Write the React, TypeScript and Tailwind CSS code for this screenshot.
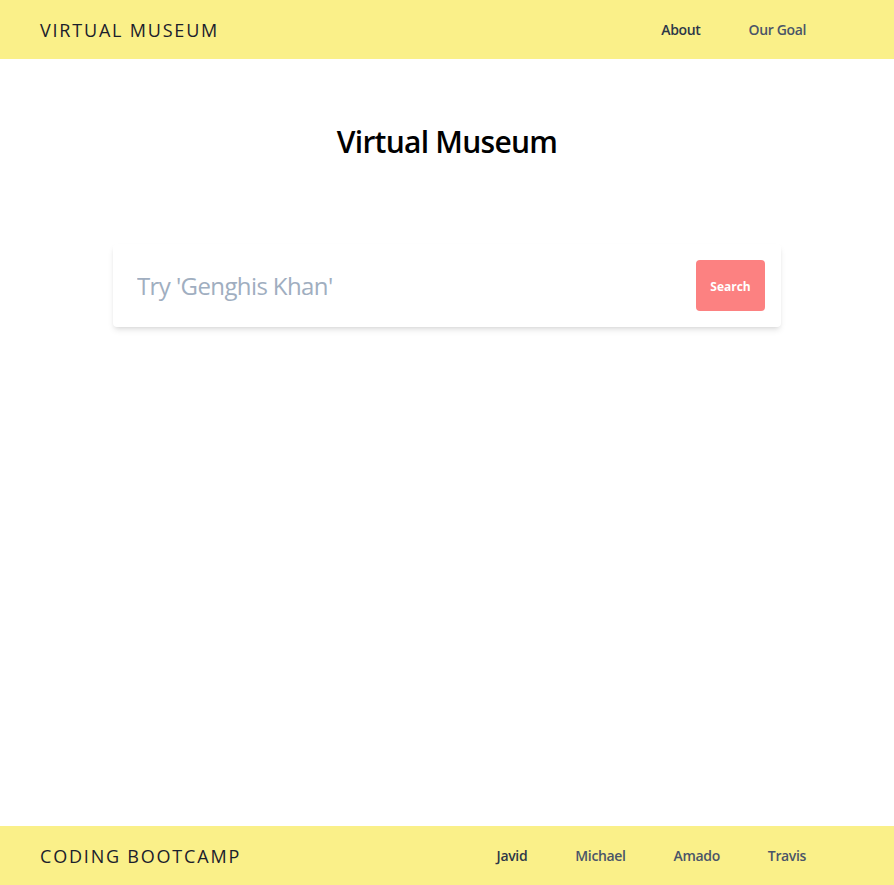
import React from "react";

const font = { fontFamily: '"Open Sans", "Noto Sans", sans-serif' };

function NavBar({ brand, links }: { brand: string; links: string[] }) {
  return (
    <nav className="flex h-[59px] items-center justify-between bg-[#faf089] pl-10 pr-[88px]">
      <span className="text-lg font-medium tracking-widest text-[#1a202c]">{brand}</span>
      <div className="flex items-center gap-12">
        {links.map((l, i) => (
          <a
            key={l}
            href="#"
            className={`text-sm font-semibold tracking-tight ${i === 0 ? "text-[#2d3748]" : "text-[#4a5568]"}`}
          >
            {l}
          </a>
        ))}
      </div>
    </nav>
  );
}

export default function App() {
  return (
    <div className="flex min-h-[885px] flex-col bg-white" style={font}>
      <NavBar brand="VIRTUAL MUSEUM" links={["About", "Our Goal"]} />

      <main className="flex flex-1 flex-col items-center">
        <h1 className="mt-[65px] text-3xl font-semibold tracking-tight text-black">Virtual Museum</h1>

        <div className="mt-[84px] flex h-[83px] w-[668px] items-center rounded bg-white pl-6 pr-4 shadow-md">
          <input
            className="flex-1 bg-transparent text-2xl tracking-tight text-[#4a5568] outline-none placeholder:text-[#a0aec0]"
            placeholder="Try 'Genghis Khan'"
          />
          <button className="h-[51px] w-[69px] rounded bg-[#fc8181] pt-0.5 text-xs font-bold text-white">
            Search
          </button>
        </div>
      </main>

      <NavBar brand="CODING BOOTCAMP" links={["Javid", "Michael", "Amado", "Travis"]} />
    </div>
  );
}
